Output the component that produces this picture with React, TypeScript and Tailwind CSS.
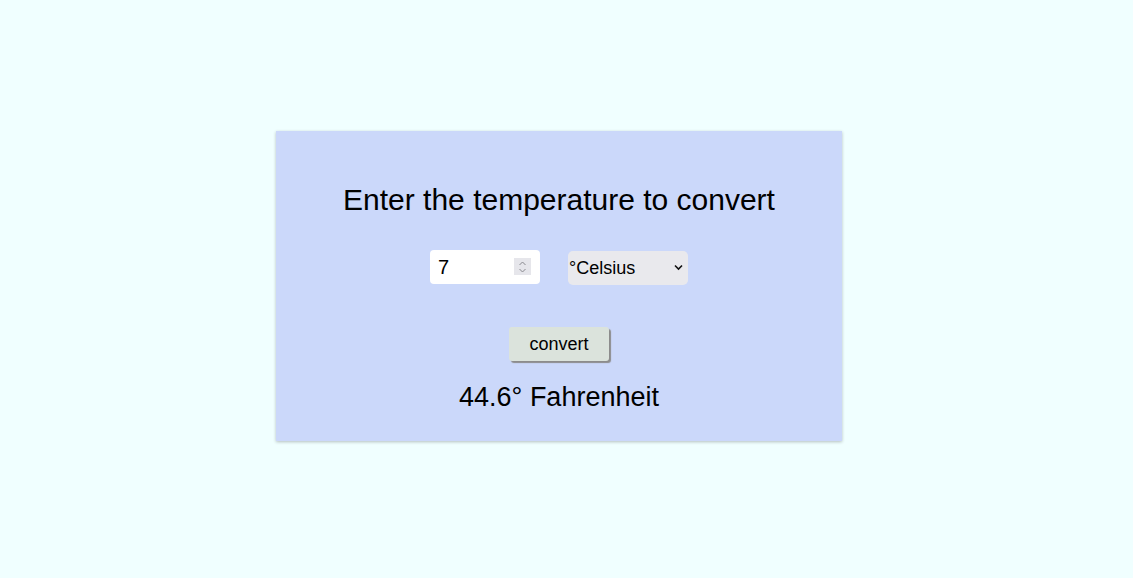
import React, { useState } from "react";

export default function App() {
  const [value, setValue] = useState("7");
  const [unit, setUnit] = useState("celsius");
  const [result, setResult] = useState("44.6° Fahrenheit");

  const convert = () => {
    const n = parseFloat(value);
    if (isNaN(n)) return;
    if (unit === "celsius") {
      setResult(`${Math.round((n * 9) / 5 * 10 + 320) / 10}° Fahrenheit`);
    } else {
      setResult(`${Math.round(((n - 32) * 5) / 9 * 10) / 10}° Celsius`);
    }
  };

  return (
    <div
      className="min-h-screen w-full bg-[#f0ffff] pt-[131px] pl-[276px]"
      style={{ fontFamily: '"Liberation Sans", Arial, sans-serif' }}
    >
      <div className="w-[566px] h-[310px] bg-[#cbd8fa] shadow-[0_1px_3px_rgba(0,0,0,0.25)] flex flex-col items-center text-black">
        <h1 className="mt-[49px] text-[30px] leading-[40px]">Enter the temperature to convert</h1>

        <div className="mt-[29px] flex items-center gap-[28px]">
          <div className="relative w-[110px] h-[34px] bg-white rounded-[4px]">
            <input
              type="text"
              value={value}
              onChange={(e) => setValue(e.target.value)}
              className="w-full h-full bg-transparent pl-[8px] pr-[28px] text-[20px] outline-none"
            />
            <div className="absolute left-[84px] top-[8px] w-[17px] h-[17px] bg-[#e6e6eb] flex flex-col items-center justify-center">
              <svg width="9" height="14" viewBox="0 0 9 14" fill="none" stroke="#8a8a8f" strokeWidth="1">
                <path d="M1.5 5 L4.5 2 L7.5 5" />
                <path d="M1.5 9 L4.5 12 L7.5 9" />
              </svg>
            </div>
          </div>

          <div className="relative w-[120px] h-[34px] mt-[2px] bg-[#e9e9ed] rounded-[5px]">
            <select
              value={unit}
              onChange={(e) => setUnit(e.target.value)}
              className="appearance-none w-full h-full bg-transparent pl-[1px] text-[18px] outline-none"
            >
              <option value="celsius">°Celsius</option>
              <option value="fahrenheit">°Fahrenheit</option>
            </select>
            <svg
              className="absolute right-[5px] top-[13px] pointer-events-none"
              width="9"
              height="7"
              viewBox="0 0 9 7"
              fill="none"
              stroke="#111"
              strokeWidth="1.6"
            >
              <path d="M1 1.5 L4.5 5 L8 1.5" />
            </svg>
          </div>
        </div>

        <button
          onClick={convert}
          className="mt-[42px] w-[100px] h-[34px] bg-[#dbe3dc] rounded-[3px] text-[18px] shadow-[2px_2px_1px_#8c8c8c]"
        >
          convert
        </button>

        <p className="mt-[17px] text-[27px] leading-[38px]">{result}</p>
      </div>
    </div>
  );
}
